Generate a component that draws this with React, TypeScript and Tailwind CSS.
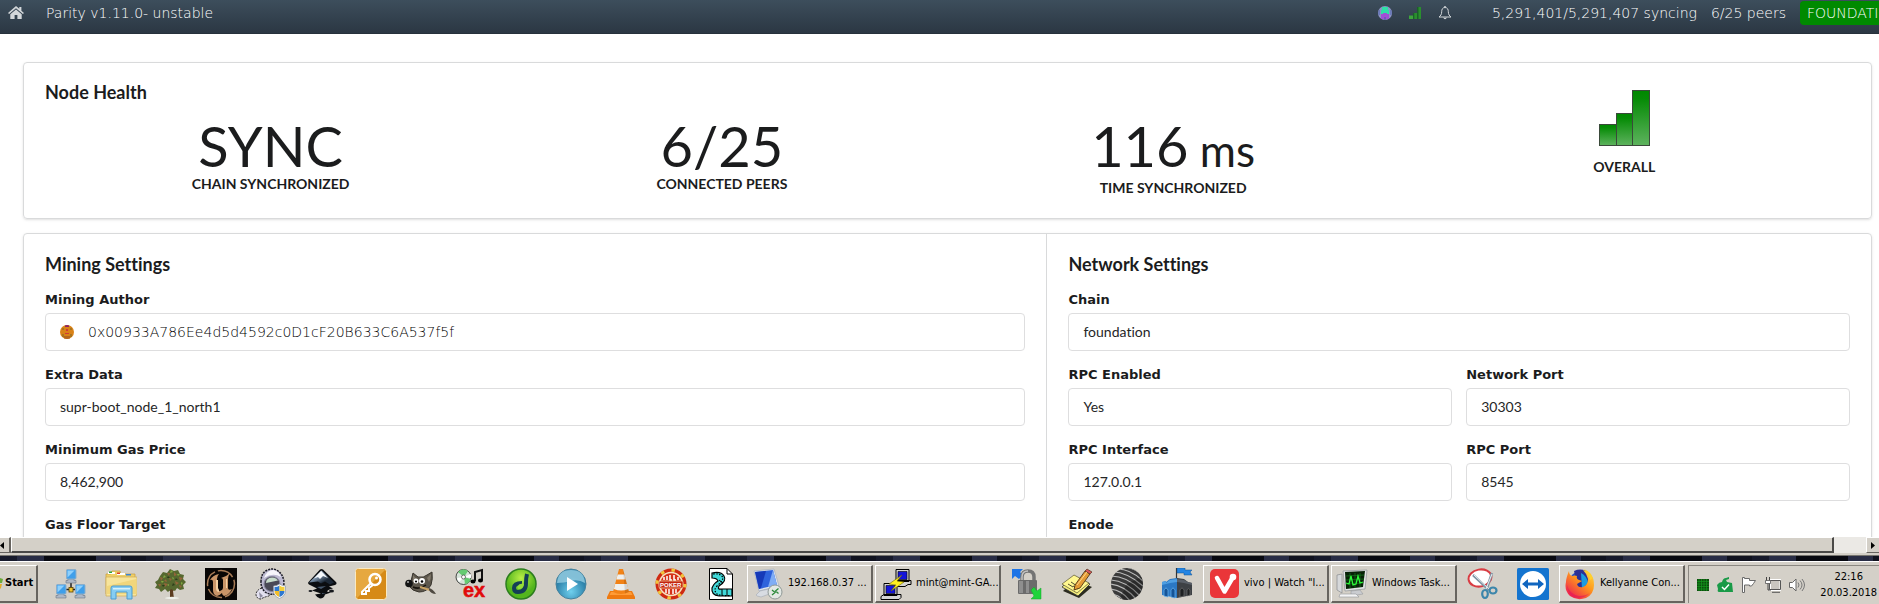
import type { ReactNode } from 'react';

/* ---------- page icons ---------- */

const HomeIcon = () => (
  <svg viewBox="0 0 16 14" className="h-3.5 w-4 shrink-0" fill="#d3d7da">
    <path d="M8 0 L0 7 L1.1 8.1 L8 2.2 L14.9 8.1 L16 7 L13.4 4.7 V0.9 H11.3 V2.8 Z" />
    <path d="M8 3.4 L2.3 8.2 V13 H6.6 V9 H9.4 V13 H13.7 V8.2 Z" />
  </svg>
);

const Identicon = ({ kind }: { kind: 'account' | 'author' }) =>
  kind === 'account' ? (
    <svg viewBox="0 0 14 14" className="size-3.5 shrink-0">
      <clipPath id="account-clip"><circle cx="7" cy="7" r="7" /></clipPath>
      <g clipPath="url(#account-clip)">
        <rect width="14" height="14" fill="#8c93c4" />
        <path d="M4 1h6v3h1v6H3V4h1z" fill="#2fe0a6" />
        <path d="M5 7h4v1h2v5H3V8h2z" fill="#a14fd6" />
        <path d="M0 4h2v5H0zM12 4h2v5h-2z" fill="#6b7ab8" />
        <path d="M6 11h2v3H6z" fill="#6f58b8" />
      </g>
    </svg>
  ) : (
    <svg viewBox="0 0 14 14" className="size-3.5 shrink-0">
      <clipPath id="author-clip"><circle cx="7" cy="7" r="7" /></clipPath>
      <g clipPath="url(#author-clip)">
        <rect width="14" height="14" fill="#d98217" />
        <path d="M5 0h4v2H5z" fill="#8d2563" />
        <path d="M6 4h2v2H6zM5 8h4v1H5z" fill="#cf3a3a" />
        <path d="M2 3h2v2H2zM10 3h2v2h-2zM2 9h2v3H2zM10 9h2v3h-2z" fill="#a8741f" />
        <path d="M4 11h6v3H4z" fill="#b5651d" />
      </g>
    </svg>
  );

const SmallSignal = () => (
  <svg viewBox="0 0 14 14" className="size-3.5 shrink-0">
    <path d="M1 9.500h4V13H1z" fill="#3da53d" />
    <path d="M5 7h4v6H5z" fill="#2a8f2e" />
    <path d="M9 1h4v12H9z" fill="#2a8f2e" />
    <path d="M9 1h1.500v12H9zM5 7h1.300v6H5z" fill="#1c5f2b" />
  </svg>
);

const BellIcon = () => (
  <svg viewBox="0 0 14 15" className="h-4 w-3.5 shrink-0" fill="none" stroke="#d3d7da">
    <path d="M7 2C4.300 2 3.700 4.200 3.700 6.200C3.700 9 2.400 10.500 1 11.500H13C11.600 10.500 10.300 9 10.300 6.200C10.300 4.200 9.700 2 7 2Z" />
    <path d="M7 0.500V2" strokeWidth="1.500" />
    <path d="M5.700 12.200a1.400 1.400 0 0 0 2.700 0" fill="#d3d7da" />
  </svg>
);

const BigSignal = () => (
  <svg viewBox="0 0 52 58" className="h-[58px] w-[52px]" stroke="#3a4a3a">
    <defs>
      <linearGradient id="bar" x1="0" y1="0" x2="0" y2="1">
        <stop offset="0" stopColor="#008800" />
        <stop offset="0.150" stopColor="#068b06" />
        <stop offset="1" stopColor="#5eb35e" />
      </linearGradient>
    </defs>
    <rect x="1.500" y="35.500" width="17" height="21" fill="url(#bar)" />
    <rect x="18.500" y="24.500" width="16" height="32" fill="url(#bar)" />
    <rect x="34.500" y="1.500" width="17" height="55" fill="url(#bar)" />
  </svg>
);

/* ---------- taskbar icons, each on a 32 x 32 grid ---------- */

const Icon = ({ children }: { children: ReactNode }) => (
  <svg viewBox="0 0 32 32" className="size-8 shrink-0">{children}</svg>
);

const MiniPc = ({ x, y }: { x: number; y: number }) => (
  <g transform={`translate(${x} ${y})`}>
    <path d="M2 10h6v1.500h2V14H0v-2.500h2z" fill="#aeb8c6" stroke="#6c7684" strokeWidth="0.600" />
    <rect x="0.500" y="0.500" width="9.500" height="9.500" rx="1" fill="#3f9fea" stroke="#8badc9" />
    <path d="M1.500 1.500h7L1.500 8.500z" fill="#8fd0fb" />
  </g>
);

const NetworkIcon = () => (
  <Icon>
    <path d="M16 14V22M9 21.500H23" stroke="#222" strokeWidth="1.500" />
    <rect x="14" y="19.500" width="4" height="4.500" fill="#f4c52c" stroke="#5b4300" strokeWidth="0.800" />
    <MiniPc x={11} y={1} /><MiniPc x={1} y={16} /><MiniPc x={20} y={16} />
  </Icon>
);

const FolderIcon = () => (
  <Icon>
    <path d="M1 6h5l1-3h8l1 3h14v20H1z" fill="#efcf67" stroke="#c79f3d" strokeWidth="0.700" />
    <path d="M3 4h7v2H3zM12 5h8v2h-8z" fill="#fff" />
    <path d="M4 3.500h3v1.500H4z" fill="#2da63b" /><path d="M12 4.500h3V6h-3z" fill="#d93c2e" /><path d="M21 6h5v1.500h-5z" fill="#3a84d4" />
    <path d="M1 9h31v17l-1 2H1z" fill="#f7e49b" stroke="#cfae55" strokeWidth="0.700" />
    <path d="M2 18L31 11v15H2z" fill="#f1d67c" />
    <path d="M6 31V20q0-2 2-2h17q2 0 2 2v11h-5v-7H11v7z" fill="#86cdf2" stroke="#4b9bd0" />
    <path d="M8 20h17v1.500H8z" fill="#d7f1fd" />
  </Icon>
);

const TreeIcon = () => (
  <Icon>
    <path d="M15 31l0-8-7-6 1-1 6 4 1-6 2 6 6-4 1 1-7 6 1 8z" fill="#5c3c20" />
    <ellipse cx="17" cy="30" rx="7" ry="1.200" fill="#eef0ea" />
    <g fill="#56682f">
      <path d="M5 8l3-4 4 1 3-4 4 2 4-1 2 4 4 1-1 4 3 3-3 3 1 4-4 1-3-2-2 3-4-2-3 3-3-3-4 3-2-3-4-1 2-3-2-3 3-2z" />
    </g>
    <path d="M5 9l3 1-2 3zM12 5l3 0-1 3zM19 4l3 3-3 1zM24 9l4 1-3 3zM9 15l4 1-3 3zM20 13l4 2-3 2zM14 10l3 1-2 2zM3 16l3 0-1 3zM24 17l3 1-2 2zM11 11l1 3-3-1z" fill="#94643a" />
    <path d="M9 7l2 2-3 1zM16 2l2 2-3 1zM22 6l3 0-2 2zM17 9l2 1-1 2zM6 13l3 0-2 2zM26 14l2 1-2 2zM12 17l2-1 0 2z" fill="#82a642" />
    <path d="M13 8l2 2-3 0zM21 10l2 2-3 0zM7 17l3 0-2 2zM18 15l2 2-3 1z" fill="#2d3d1b" />
  </Icon>
);

const UnrealIcon = () => (
  <Icon>
    <rect width="32" height="32" fill="#080605" />
    <circle cx="16" cy="16" r="13.500" fill="none" stroke="#a77b56" strokeWidth="1.500" strokeDasharray="17 3" />
    <path d="M5 12q3-5 9-6-2 2-2 5v8q0 4 3 4 3-1 3-3v-8q0-2-2-2 5-1 9-5-2 3-2 6v9q0 3 4 1-3 6-8 7-2-1-2-3-3 3-5 3-4-1-4-6v-8q0-3-3-2z" fill="#c99568" />
    <path d="M11 12v8q0 4 3 4v-2l-1-2v-8zM21 11v9h1v-9z" fill="#f5d1a2" />
  </Icon>
);

const Shield = ({ x, y }: { x: number; y: number }) => (
  <g transform={`translate(${x} ${y})`}>
    <path d="M6.500 0q3 2 6 2v5q0 5-6 7.500Q.5 12 .5 7V2q3 0 6-2z" fill="#fff" stroke="#8b96a8" strokeWidth="0.700" />
    <path d="M6.500 1.500V7H1.500V3q3 0 5-1.500z" fill="#2d78cf" /><path d="M6.500 1.500V7h5V3q-3 0-5-1.500z" fill="#f4cf3a" />
    <path d="M6.500 7v6q-5-2-5-6z" fill="#f2bd2b" /><path d="M6.500 7v6q5-2 5-6z" fill="#2d78cf" />
  </g>
);

const HelmetIcon = () => (
  <Icon>
    <path d="M7 20q-6 2-6 7 1 4 5 4 3-2 8-3l4-6z" fill="#e2e0ef" stroke="#222" strokeDasharray="2 1" />
    <path d="M6 14Q6 4 13 2q4-2 8 0 7 3 8 12 0 9-6 11-7 3-13-1-4-4-4-10z" fill="#bdbad2" stroke="#1b1b25" strokeWidth="1.500" strokeDasharray="2 1" />
    <path d="M9 10q3-8 9-8 5 0 8 7-8-5-17 1z" fill="#f6f5fb" />
    <ellipse cx="17" cy="16" rx="8" ry="7.500" fill="#494956" stroke="#85849a" />
    <path d="M11 15q0-5 6-5.500 4 0 6 3-6 1-12 2.500z" fill="#c7dccb" />
    <path d="M4 24l4 4-3 2z" fill="#8d8ba0" />
    <Shield x={18} y={16} />
  </Icon>
);

const InkscapeIcon = () => (
  <Icon>
    <defs><linearGradient id="ink" x1="0" y1="0" x2="1" y2="1"><stop offset="0" stopColor="#fff" /><stop offset="0.400" stopColor="#7d93ab" /><stop offset="0.700" stopColor="#1c2836" /></linearGradient></defs>
    <path d="M15 1.500q1.500-1 3 0L31 14q1.500 2-1 3l-6 1.500 4 2q-5 1-6 3l4 1-6 2q-1 4-5 4-3-1-5-4l6-1-9-3 5-2-8-4q-1.500-1-.5-2.500z" fill="#0b0d10" />
    <path d="M16.500 2.500L4 14.500l9-1 3 2 4-2 5 3 4-2z" fill="url(#ink)" />
    <path d="M16 3L9 10.500l4-1.500 2 2 3-3 5 2z" fill="#f5f8fb" />
    <path d="M12 19l9-1-5 3zM17 25l4 0-4 1z" fill="#47596d" />
    <ellipse cx="26.500" cy="23" rx="2.500" ry="1.500" fill="#16191d" /><ellipse cx="5.500" cy="23" rx="2" ry="1" fill="#16191d" />
  </Icon>
);

const KeyIcon = () => (
  <Icon>
    <rect x="0.500" y="0.500" width="31" height="31" rx="3" fill="#d68a17" stroke="#fbe9c1" />
    <path d="M2 30L30 2q0-1-2-1H4Q1 1 1 4v24z" fill="#e6a83f" />
    <circle cx="20" cy="11.500" r="5.500" fill="none" stroke="#fff" strokeWidth="2.500" />
    <circle cx="21.500" cy="10" r="1.500" fill="#fff" />
    <path d="M15.500 15.500L7 24v2h4v-3h3v-3l4-3" fill="none" stroke="#fff" strokeWidth="2" />
  </Icon>
);

const GimpIcon = () => (
  <Icon>
    <path d="M6 13q1-4 2-8l5 4q6 1 9-2l5-3q1 7-1 13-4 7-12 7-7-1-10-6z" fill="#5d574c" stroke="#37332c" />
    <path d="M8 7l4 5-4 2zM26 6q0 5-2 8l-2-4z" fill="#827a6c" />
    <circle cx="4" cy="15.500" r="3.800" fill="#131313" /><circle cx="3" cy="14" r="1.100" fill="#a4a4a4" />
    <circle cx="11" cy="13" r="2.500" fill="#fff" /><circle cx="17" cy="13" r="3" fill="#fff" />
    <circle cx="11" cy="13.500" r="1.100" /><circle cx="17" cy="13.500" r="1.300" />
    <path d="M8 19q6 3 13-2" stroke="#16120d" strokeWidth="1.500" fill="none" />
    <path d="M15 19l10 3" stroke="#c8a263" strokeWidth="2" /><path d="M24 20q4 1 7 6-5 0-7-4z" fill="#4f4a42" />
  </Icon>
);

const ExIcon = () => (
  <Icon>
    <circle cx="8.500" cy="9" r="7.500" fill="#d7e3da" stroke="#222" strokeWidth="0.800" />
    <path d="M9 9L3 4q5-5 10-1zM9 9l7 2q-2 5-6 5z" fill="#65cb72" />
    <path d="M9 9l7-3v4zM9 9l-5 5-2-4z" fill="#fff" /><circle cx="8.500" cy="9" r="2" fill="#fff" stroke="#444" strokeWidth="0.700" />
    <path d="M20 13V4l7-2v10" fill="none" stroke="#111" strokeWidth="2" /><ellipse cx="18" cy="13.500" rx="2.500" ry="2" /><ellipse cx="25.500" cy="12.500" rx="2.500" ry="2" />
    <text x="8" y="29" fill="#e10b0b" stroke="#e10b0b" strokeWidth="0.500" fontFamily="Liberation Sans" fontSize="20" fontWeight="700">ex</text>
  </Icon>
);

const SwirlIcon = () => (
  <Icon>
    <defs><radialGradient id="lime" cy="0.300"><stop offset="0" stopColor="#b9ee46" /><stop offset="1" stopColor="#53b51d" /></radialGradient></defs>
    <circle cx="16" cy="16" r="15" fill="url(#lime)" stroke="#2b7d1e" strokeWidth="1.500" />
    <path d="M22 6q-1 4-1 9 0 9-8 9-4 0-4-4 0-5 8-5" fill="none" stroke="#143e56" strokeWidth="4" />
    <path d="M19 16q-5-1-6 2-1 3 1 3 4 0 5-5z" fill="#95dc39" />
  </Icon>
);

const PlayIcon = () => (
  <Icon>
    <defs><radialGradient id="aqua" cy="0.750"><stop offset="0" stopColor="#6fd0ee" /><stop offset="1" stopColor="#2f83ab" /></radialGradient></defs>
    <circle cx="16" cy="16" r="15" fill="url(#aqua)" stroke="#46829d" />
    <path d="M2 15Q3 2 16 2t14 13q-7-4-14-2T2 15z" fill="#a5d8e9" opacity="0.7" />
    <path d="M12 9v14l11-7z" fill="#fff" />
  </Icon>
);

const ConeIcon = () => (
  <Icon>
    <path d="M5 23h22l3 6v2H2v-2z" fill="#ef7a10" /><path d="M6 24h20l1.500 3h-23z" fill="#ff9b36" />
    <path d="M14 1h4l6 23q-8 4-16 0z" fill="#f28216" />
    <path d="M12.700 6.500h6.700l1.300 5h-9.400zM10.200 16h11.800l1.300 5q-7 3-14.400 0z" fill="#eef0f0" />
    <path d="M18 1l6 23-4 1.500z" fill="#000" opacity="0.120" />
  </Icon>
);

const PokerIcon = () => (
  <Icon>
    <circle cx="16" cy="16" r="13.500" fill="#fff" stroke="#cf2a12" strokeWidth="4" />
    <circle cx="16" cy="16" r="14" fill="none" stroke="#f2c53a" strokeWidth="3" strokeDasharray="3.500 7.500" />
    <circle cx="16" cy="16" r="11.500" fill="#d53017" stroke="#f7e3c0" strokeWidth="1.500" />
    <path d="M9 9v3M12 8v4M15 7v5h2M19 7v5h2M23 9v3M11 21v4M14 21v5M18 21v5M21 21v4" stroke="#fff" strokeWidth="1.500" fill="none" />
    <rect x="4" y="13" width="24" height="7" rx="1" fill="#c4230f" stroke="#f2d7a6" strokeWidth="0.700" />
    <text x="5" y="19" fill="#fff" fontFamily="Liberation Sans" fontWeight="700" fontSize="6">POKER</text>
  </Icon>
);

const FilmIcon = () => (
  <Icon>
    <path d="M4.500 0.500H22L27.500 6V31.500H4.500z" fill="#fff" stroke="#000" /><path d="M22 .5V6h5.500" fill="none" stroke="#000" />
    <path d="M7 5q9-2 12 3t-5 10q-2 4 3 3h10v7H14q-8-1-7-8 2-5 6-7-1-3-6-3z" fill="#40d9da" stroke="#000" strokeWidth="1.200" />
    <path d="M8 6q8-1 10 4-1 4-6 8-4 4 0 8 3 2 14 1.500" fill="none" stroke="#000" strokeWidth="1.200" strokeDasharray="1.500 1.500" />
    <path d="M17 21v7M22 21v7M14 12l4 3" stroke="#000" />
  </Icon>
);

const RemoteIcon = () => (
  <Icon>
    <path d="M2 3l20-2 5 17-20 5z" fill="#dfe5ee" stroke="#a6afbd" strokeWidth="0.700" />
    <path d="M3 4l18-2 4 15-18 4z" fill="#2f63dc" /><path d="M3 4l11-1-5 17-2 1z" fill="#1639b8" /><path d="M21 2l4 15-9 2z" fill="#80adf5" />
    <path d="M8 23l9-2 3 4-11 4q-5-1-5-2z" fill="#d8dce2" stroke="#98a1ad" strokeWidth="0.500" />
    <circle cx="23" cy="24" r="7" fill="#e3e8e4" stroke="#8f9896" />
    <path d="M20 22l3 2.500-3 2.500M26.500 20.500l-3 2.500 3 2.500" stroke="#2c8a3b" strokeWidth="1.300" fill="none" />
  </Icon>
);

const PuttyIcon = () => (
  <Icon>
    <path d="M16 1.500h13v12H16zM13 15.500l3-3h15v4h-3l-3 2H13z" fill="#d4d4d4" stroke="#000" />
    <path d="M18 3.500h9v8h-9z" fill="#1414d8" stroke="#000" strokeWidth="0.600" />
    <path d="M4 15.500h13v12H4zM1 28.500l3-2h17v3l-2 2H1z" fill="#d4d4d4" stroke="#000" />
    <path d="M6 17.500h9v8H6z" fill="#1414d8" stroke="#000" strokeWidth="0.600" />
    <path d="M22 7l-13 9 7 1-5 6 13-9-7-1z" fill="#ffef1f" stroke="#6e6600" strokeWidth="0.600" />
  </Icon>
);

const LockIcon = () => (
  <Icon>
    <path d="M1 1h11L9 4l3 3-4 4-4-3-3 3z" fill="#1d74e6" />
    <path d="M11 14V9q0-6 6-6t6 6v5" fill="none" stroke="#747474" strokeWidth="3.500" /><path d="M11 13V9q0-6 6-6" fill="none" stroke="#c3c3c3" strokeWidth="1.500" />
    <rect x="7" y="12" width="19" height="14" rx="1" fill="#6b6b6b" /><path d="M8 13h4v12H8zM15 13h3v12h-3z" fill="#8f8f8f" />
    <path d="M20 22l3-3 3 4 4-3v11H20l3-3z" fill="#1fd33a" stroke="#17a72c" strokeWidth="0.500" />
  </Icon>
);

const NotesIcon = () => (
  <Icon>
    <path d="M2 23l12-11 17 7-13 11z" fill="#2c2c20" /><path d="M1 19l12-11 16 8-12 12z" fill="#f5ee7d" stroke="#333" strokeWidth="0.800" />
    <path d="M1 16l12-9 15 8-12 10z" fill="#fff78f" stroke="#5a5532" strokeWidth="0.700" />
    <path d="M7 16l5 3M10 14l6 4M12 18l5 3" stroke="#4e4a2d" />
    <path d="M14 17L24 3l5 3-10 14-6 2z" fill="#e39a35" stroke="#3d250b" strokeWidth="0.800" /><path d="M24 3l2-2 5 3-2 2z" fill="#d7565a" stroke="#3d250b" strokeWidth="0.600" /><path d="M16 17L26 4" stroke="#ffd98b" />
  </Icon>
);

const SphereIcon = () => (
  <Icon>
    <clipPath id="sphere"><circle cx="16" cy="16" r="16" /></clipPath>
    <g clipPath="url(#sphere)">
      <rect width="32" height="32" fill="#3a3a3a" />
      <path d="M2 4q14 0 30 14M0 8q16 0 31 15M-1 12q15 0 30 16M-1 16q14 1 26 15M-1 21q12 1 20 12M6 1q14 0 26 12M11-1q12 0 20 8M0 26q8 1 12 6" fill="none" stroke="#bcbcbc" strokeWidth="1.200" />
      <path d="M16 16L32 8v24H8z" fill="#000" opacity="0.280" />
    </g>
  </Icon>
);

const FortIcon = () => (
  <Icon>
    <path d="M15.500 0v14" stroke="#333" strokeWidth="1.200" /><path d="M16 0h8v2h7l-2 2 2 3h-8V5h-7z" fill="#2585e3" stroke="#13508f" strokeWidth="0.500" />
    <path d="M1 14l4-1v1l4-3 7-1v20L1 27z" fill="#2b78c4" />
    <path d="M16 10l7 1 4 3 4 1v12l-15 3z" fill="#3e4145" />
    <path d="M1 14l4-1v2l4-3 7-1v3l-7 1-8 2z" fill="#4f9fe2" /><path d="M16 11l7 1 4 2 4 1v2l-8-2-7-1z" fill="#5a6069" />
    <path d="M3 28v-6q2-4 4 0v7zM10 29v-7q2-4 4 0v8z" fill="#155497" stroke="#6ab4f1" strokeWidth="0.700" /><path d="M19 29v-7q2-4 4 0v6zM26 28v-6q1-3 3 0v5z" fill="#1f2123" stroke="#777" strokeWidth="0.600" />
  </Icon>
);

const VivaldiIcon = () => (
  <Icon>
    <rect x="2" y="1" width="29" height="29" rx="5" fill="#ea3639" />
    <path d="M25 9L16.500 23.500L9 10" fill="none" stroke="#fff" strokeWidth="4.500" strokeLinecap="round" strokeLinejoin="round" />
    <circle cx="25" cy="9" r="3.300" fill="#fff" />
  </Icon>
);

const TaskManagerIcon = () => (
  <Icon>
    <path d="M1 7l5-1v19l-5-3z" fill="#d6d8da" stroke="#888b8e" strokeWidth="0.700" />
    <path d="M7 3l24-1-2 19-20 2z" fill="#e3e4e6" stroke="#8f9397" strokeWidth="0.700" /><path d="M9 4l20-1-2 16-17 2z" fill="#072207" />
    <path d="M10 8l18-1M10 12l18-1M10 16l17-1M14 5v15M19 5v15M24 5v14" stroke="#147a1d" strokeWidth="0.700" />
    <path d="M10 15l3 1 2-8 2 9 3-1 2-8 2 7 3-1" stroke="#2dfa3a" strokeWidth="1.300" fill="none" />
    <path d="M15 23l9-1 3 4-12 2z" fill="#caccd0" stroke="#8f9397" strokeWidth="0.500" /><path d="M4 26h16l3 3H3z" fill="#f3f3f4" stroke="#919499" strokeWidth="0.600" />
  </Icon>
);

const ScissorsIcon = () => (
  <Icon>
    <ellipse cx="13" cy="10" rx="11.500" ry="8.500" transform="rotate(-10 13 10)" fill="#fff" stroke="#d93c43" strokeWidth="2" />
    <path d="M6 7l16 15M25 5l-6 18" stroke="#8095a4" strokeWidth="2.500" /><path d="M7 7l15 14M25 6l-6 15" stroke="#e7eef2" />
    <ellipse cx="18" cy="26" rx="2.800" ry="4" fill="none" stroke="#3c86ab" strokeWidth="2.200" /><ellipse cx="26" cy="22.500" rx="3.500" ry="3" fill="none" stroke="#3c86ab" strokeWidth="2.200" />
  </Icon>
);

const TeamViewerIcon = () => (
  <Icon>
    <rect width="32" height="32" rx="1.500" fill="#1474cf" /><circle cx="16" cy="16" r="13" fill="#fff" />
    <path d="M5 16l6-5v3.500h10V11l6 5-6 5v-3.500H11V21z" fill="#1166c0" />
  </Icon>
);

const FirefoxIcon = () => (
  <Icon>
    <defs><linearGradient id="fox" x1="1" y1="0" x2="0.200" y2="1"><stop offset="0" stopColor="#ffe14a" /><stop offset="0.450" stopColor="#ff9a1c" /><stop offset="1" stopColor="#ed1a52" /></linearGradient></defs>
    <circle cx="17" cy="15" r="12" fill="#2851c4" /><path d="M10 3q9-4 16 3l-2 12-9 6z" fill="#2c2f96" /><path d="M17 5q6 3 7 10l-6 6z" fill="#1c9be0" />
    <path d="M5 3q0 4 3 5 3-1 5 0-1 3 2 4l3 1-5 3q1 4 6 3 5-2 5-8-1-5-5-9 6 1 8 6 3 1 3 9 0 9-8 13-9 3-16-2-6-6-4-14 0-4 3-11z" fill="url(#fox)" />
    <path d="M20 1q5 5 6 11l3-2q-2-6-9-9z" fill="#ffcf2d" />
    <path d="M3 17q2 9 12 11 7 0 11-3-9 8-18 3-5-4-5-11z" fill="#e2155c" opacity="0.6" />
  </Icon>
);

/* ---------- page pieces ---------- */

const Stat = ({ value, label }: { value: ReactNode; label: string }) => (
  <div className="flex flex-1 flex-col items-center pt-3.5">
    <div className="text-[56px] leading-[56px]">{value}</div>
    <div className="text-sm leading-5 font-bold uppercase">{label}</div>
  </div>
);

const FieldLabel = ({ htmlFor, children }: { htmlFor: string; children: ReactNode }) => (
  <label htmlFor={htmlFor} className="mb-[3px] block pt-px font-['DejaVu_Sans',sans-serif] text-[13px] leading-5 font-bold">{children}</label>
);

const Field = ({ id, label, value }: { id: string; label: string; value: string }) => (
  <div className="min-w-0 flex-1">
    <FieldLabel htmlFor={id}>{label}</FieldLabel>
    <input id={id} readOnly defaultValue={value} className="h-[38px] w-full rounded border border-[#dededf] bg-white px-3.5 pb-0.5 text-sm text-[#252627] outline-none" />
  </div>
);

const Heading = ({ children }: { children: ReactNode }) => (
  <h2 className="text-lg leading-6 font-bold">{children}</h2>
);

const Slot = ({ name, children }: { name: string; children: ReactNode }) => (
  <button aria-label={name} className="flex w-[50px] shrink-0 justify-center">{children}</button>
);

const TaskButton = ({ icon, children }: { icon: ReactNode; children: ReactNode }) => (
  <div className="w-[128px] shrink-0 px-px">
    <button className="flex h-[38px] w-full items-center gap-1 border-t border-r-2 border-b-2 border-l border-t-white border-r-[#67645f] border-b-[#67645f] border-l-white pl-1 whitespace-nowrap">
      {icon}
      <span>{children}</span>
    </button>
  </div>
);

const Header = () => (
  <header className="flex h-[34px] w-[calc(100%+50px)] shrink-0 items-start border-b border-[#27313b] bg-linear-to-b from-[#3d4e5c] to-[#2b3743] font-['DejaVu_Sans_Light','DejaVu_Sans',sans-serif] text-sm font-extralight text-white">
    <div className="flex h-[26px] items-center gap-[22px] pl-2">
      <a href="#home" aria-label="Home"><HomeIcon /></a>
      <span>Parity v1.11.0- unstable</span>
    </div>
    <div className="ml-auto flex h-[26px] items-center whitespace-nowrap">
      <div className="flex items-center gap-4">
        <Identicon kind="account" />
        <SmallSignal />
        <button aria-label="Notifications"><BellIcon /></button>
      </div>
      <span className="ml-10">5,291,401/5,291,407 syncing</span>
      <span className="ml-3.5">6/25 peers</span>
      <span className="ml-3.5 w-[129px] rounded bg-[#008a00] px-[7px] py-0.5">FOUNDATION</span>
    </div>
  </header>
);

const ScrollBar = () => (
  <div className="flex h-4 shrink-0 bg-[#ebe9e5]">
    <button aria-label="Scroll left" className="flex w-[11px] items-center justify-start border-t border-r-2 border-b border-t-white border-r-[#67645f] border-b-[#67645f] bg-[#d4d0c8]">
      <svg viewBox="0 0 4 7" className="h-[7px] w-1"><path d="M4 0v7L0 3.500z" /></svg>
    </button>
    <div className="mr-[32px] flex-1 border-t border-r-2 border-b-2 border-l border-t-white border-r-[#4a4947] border-b-[#4a4947] border-l-white bg-[#d4d0c8]" />
    <button aria-label="Scroll right" className="flex w-[13px] items-center justify-center border-t border-b border-l border-t-white border-b-[#67645f] border-l-white bg-[#d4d0c8]">
      <svg viewBox="0 0 4 7" className="h-[7px] w-1"><path d="M0 0v7L4 3.500z" /></svg>
    </button>
  </div>
);

const Tray = () => (
  <div className="ml-0.5 flex h-[38px] min-w-[191px] flex-1 items-center justify-between border-t border-l border-[#8b8882] pr-0.5 pl-2">
    <div className="flex items-center gap-2">
      <svg viewBox="0 0 12 12" className="size-3"><rect width="12" height="12" fill="#0b4d0d" /><path d="M2 0v12M4.500 0v12M7 0v12M9.500 0v12M0 2.500h12M0 5h12M0 7.500h12M0 10h12" stroke="#159a1c" strokeWidth="0.700" /></svg>
      <svg viewBox="0 0 16 16" className="size-4"><path d="M0 8q2-3 5-3 1-4 4-4l3-1v2l-3 1 1 2 5 1 1 9H2q-2 0-1-3z" fill="#199a47" /><path d="M5 10l2.500 2.500L12 7.500" fill="none" stroke="#fff" strokeWidth="1.500" /></svg>
      <svg viewBox="0 0 16 16" className="size-4"><path d="M1.500 15.500v-15h2v1h5v2h6l-2 3-2 2.500H8.500v-1h-5v7.500z" fill="#fff" stroke="#6b6b6b" /></svg>
      <svg viewBox="0 0 16 16" className="size-4"><path d="M5 3h10.500v10H5z" fill="#c9c6c0" stroke="#fff" strokeWidth="2" /><path d="M4.500 3.500h11v9h-11zM7 15.300h8" fill="none" stroke="#555" /><path d="M1.500 0v4M4.500 0v4M3 6v7h3" fill="none" stroke="#444" /><path d="M.5 3.500h5v3h-5z" fill="#fff" stroke="#555" strokeWidth="0.800" /></svg>
      <svg viewBox="0 0 16 16" className="size-4"><path d="M.5 5.500h3L7 2v12l-3.500-3.500h-3z" fill="#fff" stroke="#666" /><path d="M9 5.500q2 2.500 0 5M11 3.500q4 4.500 0 9M13 2q5 6 0 12" fill="none" stroke="#777" /></svg>
    </div>
    <time className="text-center leading-4">22:16<br />20.03.2018</time>
  </div>
);

const Taskbar = () => (
  <nav aria-label="Taskbar" className="flex h-[43px] shrink-0 items-center border-t border-white bg-[#d4d0c8] pt-0.5 font-['DejaVu_Sans_Condensed','DejaVu_Sans',sans-serif] text-[11px] text-black">
    <button className="mr-2 flex h-[38px] w-[38px] shrink-0 items-center gap-0.5 border-t border-r-2 border-b-2 border-t-white border-r-[#67645f] border-b-[#67645f] font-bold">
      <svg viewBox="0 0 3 11" className="h-[11px] w-[3px] shrink-0"><path d="M0 0l3 1-1 4H0z" fill="#6bab3a" /><path d="M0 6h2l-1 4-1 1z" fill="#e5ad2c" /></svg>
      Start
    </button>
    <Slot name="Network"><NetworkIcon /></Slot>
    <Slot name="Explorer"><FolderIcon /></Slot>
    <Slot name="Tree"><TreeIcon /></Slot>
    <Slot name="Unreal"><UnrealIcon /></Slot>
    <Slot name="Helmet"><HelmetIcon /></Slot>
    <Slot name="Inkscape"><InkscapeIcon /></Slot>
    <Slot name="Passwords"><KeyIcon /></Slot>
    <Slot name="GIMP"><GimpIcon /></Slot>
    <Slot name="Audio extractor"><ExIcon /></Slot>
    <Slot name="Swirl"><SwirlIcon /></Slot>
    <Slot name="Player"><PlayIcon /></Slot>
    <Slot name="VLC"><ConeIcon /></Slot>
    <Slot name="Poker"><PokerIcon /></Slot>
    <Slot name="Film"><FilmIcon /></Slot>
    <TaskButton icon={<RemoteIcon />}>192.168.0.37 ...</TaskButton>
    <TaskButton icon={<PuttyIcon />}>mint@mint-GA...</TaskButton>
    <Slot name="Lock"><LockIcon /></Slot>
    <Slot name="Notes"><NotesIcon /></Slot>
    <Slot name="Sphere"><SphereIcon /></Slot>
    <Slot name="Fort"><FortIcon /></Slot>
    <TaskButton icon={<VivaldiIcon />}>vivo | Watch "l...</TaskButton>
    <TaskButton icon={<TaskManagerIcon />}>Windows Task...</TaskButton>
    <Slot name="Snipping"><ScissorsIcon /></Slot>
    <Slot name="TeamViewer"><TeamViewerIcon /></Slot>
    <TaskButton icon={<FirefoxIcon />}>Kellyanne Con...</TaskButton>
    <Tray />
  </nav>
);

export default function App() {
  return (
    <div className="flex h-screen flex-col overflow-hidden bg-white font-['Lato',sans-serif] text-[#1b1c1d] [font-variant-ligatures:none]">
      <Header />
      <main className="min-h-0 flex-1 overflow-hidden pt-7 pr-[7px] pl-[23px]">
        <section className="rounded border border-[#d9dadb] px-[21px] pt-[17px] pb-5 shadow-sm">
          <Heading>Node Health</Heading>
          <div className="flex items-start">
            <Stat value="SYNC" label="Chain Synchronized" />
            <Stat value="6/25" label="Connected Peers" />
            <Stat value={<div className="pb-1">116<small className="text-[44px] leading-none"> ms</small></div>} label="Time Synchronized" />
            <div className="-mt-[15px] flex flex-1 flex-col items-center">
              <BigSignal />
              <div className="mt-2.5 text-sm leading-5 font-bold">OVERALL</div>
            </div>
          </div>
        </section>

        <section className="mt-3.5 grid grid-cols-[1023fr_825fr] rounded border border-[#d9dadb] shadow-sm">
          <div className="flex flex-col gap-[13px] px-[21px] pt-[18px] pb-5">
            <Heading>Mining Settings</Heading>
            <div>
              <FieldLabel htmlFor="author">Mining Author</FieldLabel>
              <div className="flex h-[38px] items-center gap-3.5 rounded border border-[#dededf] px-3.5">
                <Identicon kind="author" />
                <input id="author" readOnly defaultValue="0x00933A786Ee4d5d4592c0D1cF20B633C6A537f5f" className="w-full font-['DejaVu_Sans_Light','DejaVu_Sans',sans-serif] text-sm font-extralight text-black outline-none" />
              </div>
            </div>
            <Field id="extra" label="Extra Data" value="supr-boot_node_1_north1" />
            <Field id="gas-price" label="Minimum Gas Price" value="8,462,900" />
            <Field id="gas-floor" label="Gas Floor Target" value="" />
          </div>
          <div className="flex flex-col gap-[13px] border-l border-[#d9dadb] px-[21px] pt-[18px] pb-5">
            <Heading>Network Settings</Heading>
            <Field id="chain" label="Chain" value="foundation" />
            <div className="flex flex-1 gap-3.5">
              <Field id="rpc-enabled" label="RPC Enabled" value="Yes" />
              <Field id="net-port" label="Network Port" value="30303" />
            </div>
            <div className="flex flex-1 gap-3.5">
              <Field id="rpc-interface" label="RPC Interface" value="127.0.0.1" />
              <Field id="rpc-port" label="RPC Port" value="8545" />
            </div>
            <Field id="enode" label="Enode" value="" />
          </div>
        </section>
      </main>
      <ScrollBar />
      <div className="h-[3px] shrink-0 border-b border-[#77756f] bg-[#d4d0c8]" />
      <div className="h-[5px] shrink-0 bg-[repeating-linear-gradient(90deg,#171a2b_0_17px,#292d45_17px_44px,#080910_44px_96px,#292d45_96px_121px,#10121e_121px_146px)]" />
      <Taskbar />
    </div>
  );
}
